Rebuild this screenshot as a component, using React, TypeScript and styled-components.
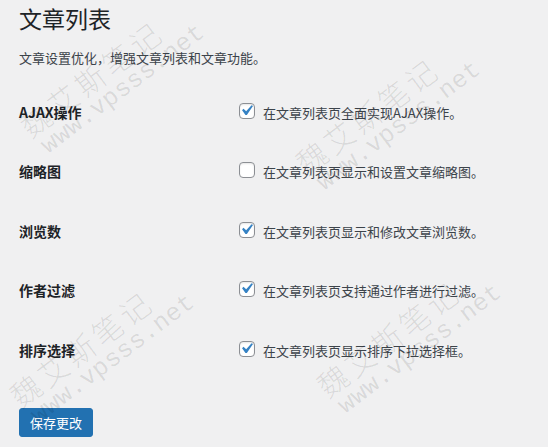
import React from "react";
import styled, { createGlobalStyle } from "styled-components";

const GlobalStyle = createGlobalStyle`
  html, body {
    margin: 0;
    padding: 0;
    background: #f0f0f1;
  }
  body {
    font-family: "Noto Sans CJK SC", "Noto Sans", sans-serif;
    color: #1d2327;
  }
`;

const Wrap = styled.div`
  position: relative;
  box-sizing: border-box;
  min-height: 447px;
  overflow: hidden;
  padding: 3px 20px 0 19px;
`;

const Title = styled.h1`
  margin: 0;
  font-size: 23px;
  font-weight: 400;
  line-height: 30px;
  color: #1d2327;
`;

const Description = styled.p`
  margin: 15px 0 0;
  font-size: 13px;
  line-height: 19.5px;
  color: #3c434a;
`;

const FormTable = styled.div`
  margin-top: 15px;
  display: flex;
  flex-direction: column;
`;

const Row = styled.div`
  display: grid;
  grid-template-columns: 210px 1fr;
`;

const Th = styled.div`
  padding: 20px 10px 20px 0;
  font-size: 14px;
  font-weight: 700;
  line-height: 19.5px;
  color: #1d2327;
`;

const Td = styled.div`
  padding: 20px 10px;
`;

const Label = styled.label`
  display: flex;
  align-items: center;
  gap: 8px;
  font-size: 13px;
  line-height: 19.5px;
  color: #3c434a;
`;

const Box = styled.span<{ $checked: boolean }>`
  position: relative;
  box-sizing: border-box;
  flex: none;
  width: 16px;
  height: 16px;
  margin-top: -3px;
  border: 1px solid #8c8f94;
  border-radius: 4px;
  background: #fff;
  box-shadow: inset 0 1px 2px rgba(0, 0, 0, 0.1);

  svg {
    position: absolute;
    left: -4px;
    top: -4px;
    width: 21px;
    height: 21px;
    display: ${(p) => (p.$checked ? "block" : "none")};
  }
`;

const Submit = styled.div`
  margin-top: 28px;
`;

const Button = styled.button`
  box-sizing: border-box;
  height: 29px;
  padding: 0 10px;
  border: 1px solid #2271b1;
  border-radius: 3px;
  background: #2271b1;
  color: #fff;
  font-family: "Noto Sans CJK SC", sans-serif;
  font-size: 13px;
  line-height: 27px;
  cursor: pointer;
`;

const Mark = styled.div`
  position: absolute;
  pointer-events: none;
  transform-origin: 0 0;
  transform: rotate(-37deg);
  color: rgba(0, 0, 0, 0.1);
  white-space: nowrap;
`;

const MarkName = styled.div`
  font-family: "Noto Sans CJK SC", sans-serif;
  font-size: 30px;
  font-weight: 300;
  letter-spacing: 4px;
  line-height: 30px;
`;

const MarkUrl = styled.div`
  padding-left: 5px;
  font-family: "Liberation Mono", monospace;
  font-size: 25px;
  letter-spacing: 0.2px;
  line-height: 28px;
`;

const CheckIcon = () => (
  <svg viewBox="0 0 20 20" aria-hidden="true">
    <path
      d="M14.83 4.89l1.34.94-5.81 8.38H9.02L5.78 9.67l1.34-1.25 2.57 2.4z"
      fill="#3582c4"
    />
  </svg>
);

const rows = [
  { label: "AJAX操作", text: "在文章列表页全面实现AJAX操作。", checked: true },
  { label: "缩略图", text: "在文章列表页显示和设置文章缩略图。", checked: false },
  { label: "浏览数", text: "在文章列表页显示和修改文章浏览数。", checked: true },
  { label: "作者过滤", text: "在文章列表页支持通过作者进行过滤。", checked: true },
  { label: "排序选择", text: "在文章列表页显示排序下拉选择框。", checked: true },
];

const marks = [
  { left: 14, top: 117 },
  { left: 290, top: 154 },
  { left: 4, top: 387 },
  { left: 311, top: 377 },
];

export default function App() {
  return (
    <>
      <GlobalStyle />
      <Wrap>
        <Title>文章列表</Title>
        <Description>文章设置优化，增强文章列表和文章功能。</Description>
        <FormTable>
          {rows.map((r) => (
            <Row key={r.label}>
              <Th>{r.label}</Th>
              <Td>
                <Label>
                  <Box $checked={r.checked}>
                    <CheckIcon />
                  </Box>
                  {r.text}
                </Label>
              </Td>
            </Row>
          ))}
        </FormTable>
        <Submit>
          <Button type="button">保存更改</Button>
        </Submit>
        {marks.map((m, i) => (
          <Mark key={i} style={{ left: m.left, top: m.top }}>
            <MarkName>魏艾斯笔记</MarkName>
            <MarkUrl>www.vpsss.net</MarkUrl>
          </Mark>
        ))}
      </Wrap>
    </>
  );
}
